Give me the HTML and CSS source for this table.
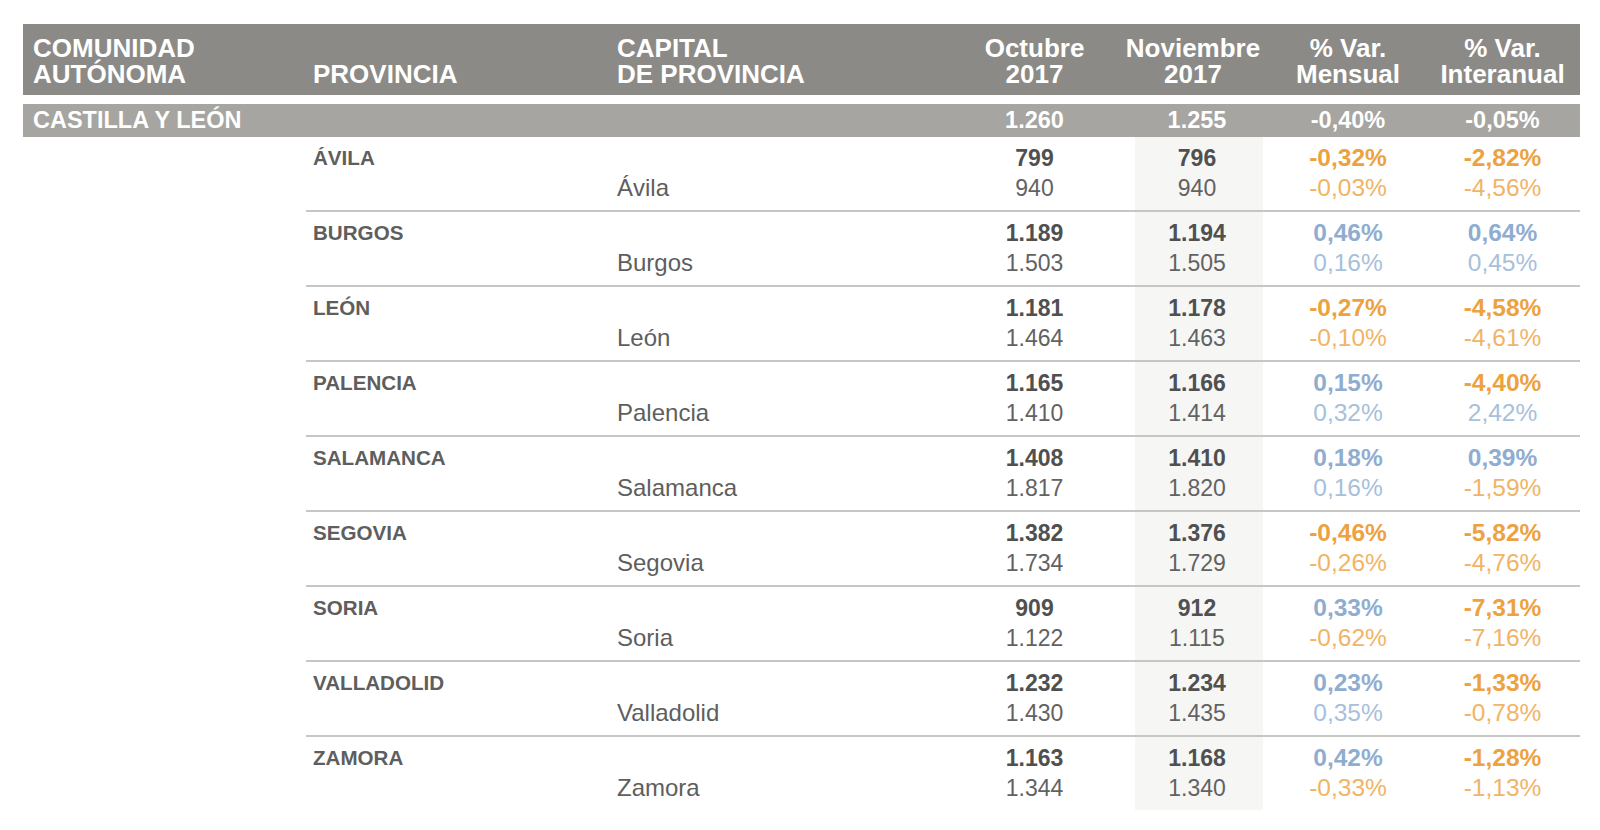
FILE: index.html
```html
<!DOCTYPE html>
<html lang="es">
<head>
<meta charset="utf-8">
<title>Precio vivienda Castilla y León</title>
<link rel="stylesheet" href="styles.css">
</head>
<body>
<div class="table">
  <div class="head">
    <div class="h h-com">COMUNIDAD<br>AUTÓNOMA</div>
    <div class="h h-prov">PROVINCIA</div>
    <div class="h h-cap">CAPITAL<br>DE PROVINCIA</div>
    <div class="h num oct">Octubre<br>2017</div>
    <div class="h num nov">Noviembre<br>2017</div>
    <div class="h num men">% Var.<br>Mensual</div>
    <div class="h num int">% Var.<br>Interanual</div>
  </div>
  <div class="region">
    <div class="r-name">CASTILLA Y LEÓN</div>
    <div></div>
    <div></div>
    <div class="num oct">1.260</div>
    <div class="num nov">1.255</div>
    <div class="num men">-0,40%</div>
    <div class="num int">-0,05%</div>
  </div>
  <div class="provs">
    <div class="row">
      <div class="c prov">ÁVILA</div>
      <div class="c cap">Ávila</div>
      <div class="c num oct"><b>799</b><span>940</span></div>
      <div class="c num nov"><b>796</b><span>940</span></div>
      <div class="c num men"><b class="neg">-0,32%</b><span class="neg">-0,03%</span></div>
      <div class="c num int"><b class="neg">-2,82%</b><span class="neg">-4,56%</span></div>
    </div>
    <div class="row">
      <div class="c prov">BURGOS</div>
      <div class="c cap">Burgos</div>
      <div class="c num oct"><b>1.189</b><span>1.503</span></div>
      <div class="c num nov"><b>1.194</b><span>1.505</span></div>
      <div class="c num men"><b class="pos">0,46%</b><span class="pos">0,16%</span></div>
      <div class="c num int"><b class="pos">0,64%</b><span class="pos">0,45%</span></div>
    </div>
    <div class="row">
      <div class="c prov">LEÓN</div>
      <div class="c cap">León</div>
      <div class="c num oct"><b>1.181</b><span>1.464</span></div>
      <div class="c num nov"><b>1.178</b><span>1.463</span></div>
      <div class="c num men"><b class="neg">-0,27%</b><span class="neg">-0,10%</span></div>
      <div class="c num int"><b class="neg">-4,58%</b><span class="neg">-4,61%</span></div>
    </div>
    <div class="row">
      <div class="c prov">PALENCIA</div>
      <div class="c cap">Palencia</div>
      <div class="c num oct"><b>1.165</b><span>1.410</span></div>
      <div class="c num nov"><b>1.166</b><span>1.414</span></div>
      <div class="c num men"><b class="pos">0,15%</b><span class="pos">0,32%</span></div>
      <div class="c num int"><b class="neg">-4,40%</b><span class="pos">2,42%</span></div>
    </div>
    <div class="row">
      <div class="c prov">SALAMANCA</div>
      <div class="c cap">Salamanca</div>
      <div class="c num oct"><b>1.408</b><span>1.817</span></div>
      <div class="c num nov"><b>1.410</b><span>1.820</span></div>
      <div class="c num men"><b class="pos">0,18%</b><span class="pos">0,16%</span></div>
      <div class="c num int"><b class="pos">0,39%</b><span class="neg">-1,59%</span></div>
    </div>
    <div class="row">
      <div class="c prov">SEGOVIA</div>
      <div class="c cap">Segovia</div>
      <div class="c num oct"><b>1.382</b><span>1.734</span></div>
      <div class="c num nov"><b>1.376</b><span>1.729</span></div>
      <div class="c num men"><b class="neg">-0,46%</b><span class="neg">-0,26%</span></div>
      <div class="c num int"><b class="neg">-5,82%</b><span class="neg">-4,76%</span></div>
    </div>
    <div class="row">
      <div class="c prov">SORIA</div>
      <div class="c cap">Soria</div>
      <div class="c num oct"><b>909</b><span>1.122</span></div>
      <div class="c num nov"><b>912</b><span>1.115</span></div>
      <div class="c num men"><b class="pos">0,33%</b><span class="neg">-0,62%</span></div>
      <div class="c num int"><b class="neg">-7,31%</b><span class="neg">-7,16%</span></div>
    </div>
    <div class="row">
      <div class="c prov">VALLADOLID</div>
      <div class="c cap">Valladolid</div>
      <div class="c num oct"><b>1.232</b><span>1.430</span></div>
      <div class="c num nov"><b>1.234</b><span>1.435</span></div>
      <div class="c num men"><b class="pos">0,23%</b><span class="pos">0,35%</span></div>
      <div class="c num int"><b class="neg">-1,33%</b><span class="neg">-0,78%</span></div>
    </div>
    <div class="row">
      <div class="c prov">ZAMORA</div>
      <div class="c cap">Zamora</div>
      <div class="c num oct"><b>1.163</b><span>1.344</span></div>
      <div class="c num nov"><b>1.168</b><span>1.340</span></div>
      <div class="c num men"><b class="pos">0,42%</b><span class="neg">-0,33%</span></div>
      <div class="c num int"><b class="neg">-1,28%</b><span class="neg">-1,13%</span></div>
    </div>
  </div>
</div>
</body>
</html>
```
FILE: styles.css
```css
body {
  margin: 0;
  background: #ffffff;
  font-family: "Liberation Sans", Arial, Helvetica, sans-serif;
  color: #5a5a5a;
}

.table {
  width: 1557px;
  padding: 24px 0 0 23px;
}

.head,
.region {
  display: grid;
  grid-template-columns: 283px 306px 354px 169px 128px 170px 147px;
}

.head {
  box-sizing: border-box;
  height: 71px;
  padding: 11px 0 8px;
  background: #8b8a86;
  color: #ffffff;
  font-weight: bold;
  font-size: 26px;
  line-height: 26px;
  align-items: end;
}

.h-com { padding-left: 10px; }
.h-prov { padding-left: 7px; }
.h-cap { padding-left: 5px; }

.region {
  margin-top: 9px;
  height: 33px;
  background: #a6a5a1;
  color: #ffffff;
  font-weight: bold;
  font-size: 23.5px;
  line-height: 33px;
}

.r-name {
  padding-left: 10px;
  white-space: nowrap;
}

.provs {
  margin-left: 283px;
}

.row {
  display: grid;
  grid-template-columns: 306px 354px 169px 128px 170px 147px;
  border-bottom: 2px solid #c6c6c4;
}

.row:last-child {
  border-bottom: none;
}

.c {
  box-sizing: border-box;
  height: 73px;
  padding-top: 6px;
  padding-bottom: 7px;
  font-size: 23px;
  line-height: 30px;
}

.c b,
.c span {
  display: block;
}

.c b {
  color: #505050;
}

.c span {
  color: #626262;
}

.prov {
  padding-left: 7px;
  font-size: 20.6px;
  font-weight: bold;
  color: #5e5e5e;
}

.cap {
  padding-top: 36px;
  padding-left: 5px;
  font-size: 24px;
  color: #5e5e5e;
}

.c.nov {
  background: #f6f6f4;
}

.c.men,
.c.int {
  font-size: 24.5px;
}

.num { text-align: center; }
.oct { padding-right: 32px; }
.nov { padding-right: 4px; }
.h.nov {
  margin-left: -12px;
  padding-right: 0;
}
.men { padding-right: 0; }
.int { padding-right: 8px; }

.c b.neg { color: #eda23f; }
.c span.neg { color: #f1b466; }
.c b.pos { color: #8fadd0; }
.c span.pos { color: #a7c0db; }
```
